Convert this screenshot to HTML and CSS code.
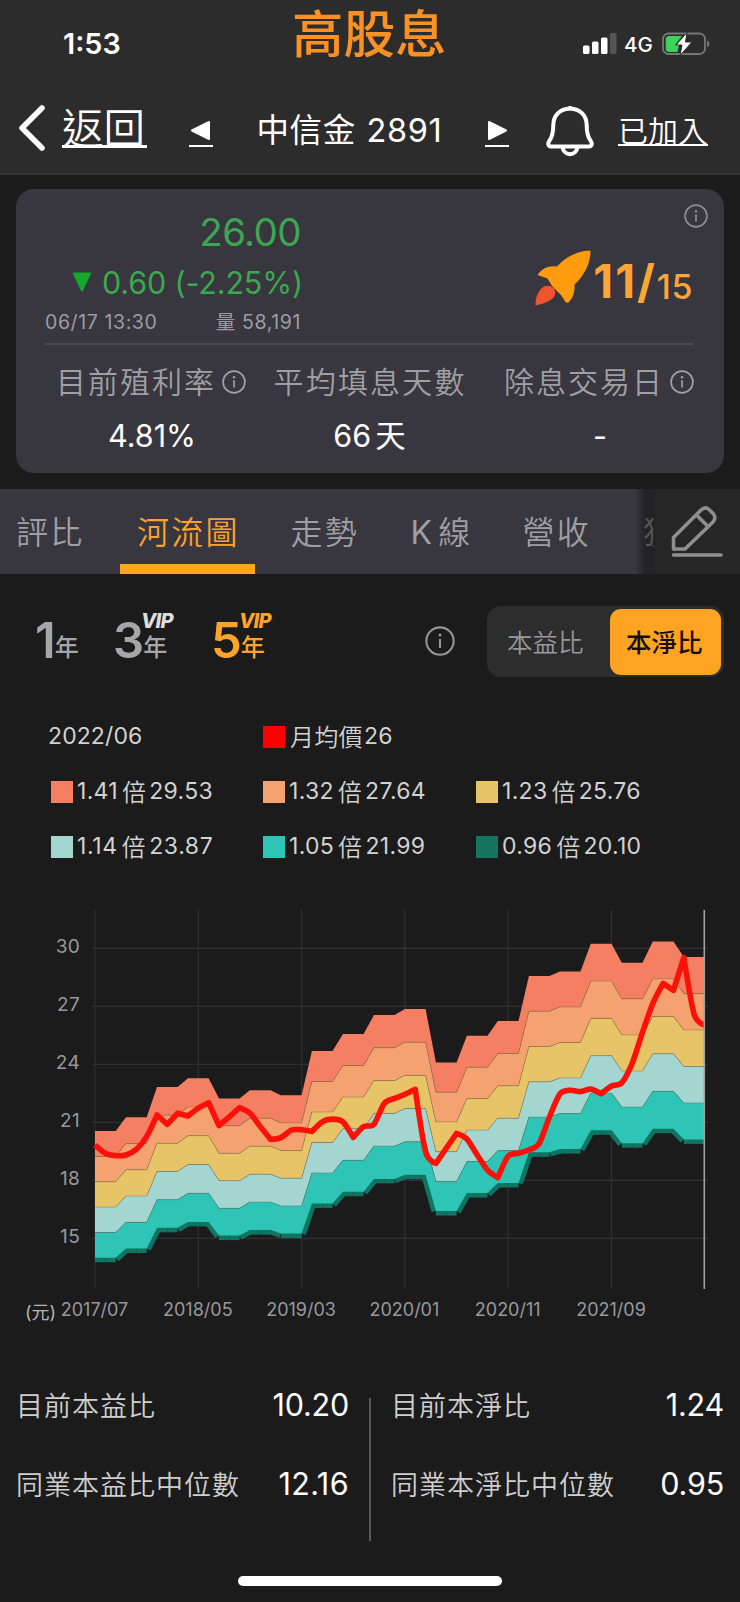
FILE: index.html
```html
<!DOCTYPE html>
<html lang="zh-Hant">
<head>
<meta charset="utf-8">
<title>高股息</title>
<link rel="stylesheet" href="styles.css">
</head>
<body>
<svg width="0" height="0" class="defs">
  <symbol id="info" viewBox="0 0 24 24">
    <circle cx="12" cy="12" r="10.9" fill="none" stroke="currentColor" stroke-width="1.7"/>
    <circle cx="12" cy="7.2" r="1.2" fill="currentColor"/>
    <path d="M12 10.3V17.5" stroke="currentColor" stroke-width="1.7"/>
  </symbol>
</svg>
<header class="header">
  <div class="status">
    <span class="clock">1:53</span>
    <span class="app-title">高股息</span>
    <div class="indicators">
      <svg width="34" height="22" viewBox="0 0 34 22">
        <rect x="0" y="12.500" width="6.500" height="8.500" rx="1.500" fill="#fff"/>
        <rect x="9" y="8.500" width="6.500" height="12.500" rx="1.500" fill="#fff"/>
        <rect x="18" y="4.500" width="6.500" height="16.500" rx="1.500" fill="#fff"/>
        <rect x="27" y="0" width="6.500" height="21" rx="1.500" fill="#555"/>
      </svg>
      <span class="network">4G</span>
      <svg class="battery" width="48" height="24" viewBox="0 0 48 24">
        <rect x="1" y="1.500" width="42" height="20.500" rx="5.500" fill="none" stroke="#777" stroke-width="1.800"/>
        <path d="M45 8.500C48.200 9.500 48.200 14 45 15Z" fill="#777"/>
        <path d="M7 4H20L13 13H17L15.500 20H7Q3.700 20 3.700 16.500V7.500Q3.700 4 7 4Z" fill="#3ad45c"/>
        <path d="M25 0.500L14 13H20L18 23.500L30 10H23.500Z" fill="#fff" stroke="#2c2c2c" stroke-width="1"/>
      </svg>
    </div>
  </div>
  <nav class="nav">
    <svg class="chev" width="28" height="48" viewBox="0 0 28 48"><path d="M24 4L4 24L24 44" fill="none" stroke="#fff" stroke-width="5.500" stroke-linecap="round" stroke-linejoin="round"/></svg>
    <a class="back">返回</a>
    <svg class="prev" width="24" height="28" viewBox="0 0 24 28"><path d="M3 10.500L20 2V19Z" fill="#fff" stroke="#fff" stroke-width="2" stroke-linejoin="round"/><path d="M0 26H24" stroke="#fff" stroke-width="2"/></svg>
    <span class="stock">中信金 2891</span>
    <svg class="next" width="24" height="28" viewBox="0 0 24 28"><path d="M21 10.500L4 2V19Z" fill="#fff" stroke="#fff" stroke-width="2" stroke-linejoin="round"/><path d="M0 26H24" stroke="#fff" stroke-width="2"/></svg>
    <svg class="bell" width="48" height="52" viewBox="0 0 48 52" fill="none" stroke="#fff" stroke-width="4" stroke-linejoin="round"><path d="M24 3.500C13.500 4 7.500 10.500 7.300 20C7.300 28 6.500 31.500 3.500 35.500C1.500 38.500 2 41.500 5 41.500H43C46 41.500 46.500 38.500 44.500 35.500C41.500 31.500 40.700 28 40.700 20C40.500 10.500 34.500 4 24 3.500Z"/><path d="M16.500 42C17.500 51.500 30.500 51.500 31.500 42"/><path d="M22.500 2.500H25.500" stroke-width="3"/></svg>
    <a class="joined">已加入</a>
  </nav>
</header>

<section class="card">
  <div class="card-top">
    <div class="quote">
      <div class="price">26.00</div>
      <div class="change"><svg width="20" height="21" viewBox="0 0 20 21"><path d="M1 1H19L10 19.500Z" fill="#14a92c" stroke="#14a92c" stroke-linejoin="round"/></svg><span>0.60 (-2.25%)</span></div>
      <div class="trade"><span>06/17 13:30</span><span>量 58,191</span></div>
    </div>
    <div class="rating">
      <svg class="info-s" width="24" height="24"><use href="#info"/></svg>
      <div class="score">
        <svg class="rocket" width="56" height="57" viewBox="0 0 56 57"><path d="M55.500 0.500C39 1 29 9 22 16.500C13 15.500 7 18.500 2.500 25C7 26.500 10 27.500 12.500 28.500L17 36L26 45L30.500 52L33 53C38 48 40 42 39.500 34.500C49 26 55.500 14 55.500 0.500Z" fill="#ff9b0f"/><path d="M0.500 55.500C0 48 4 39 9 36.500C17 33.500 23 40.500 19 47C16 51 8 54 0.500 55.500Z" fill="#f1532e"/></svg>
        <span class="big">11/</span><span class="small">15</span>
      </div>
    </div>
  </div>
  <div class="metrics">
    <div class="metric m1"><div class="label">目前殖利率<svg width="24" height="24"><use href="#info"/></svg></div><div class="val">4.81%</div></div>
    <div class="metric m2"><div class="label">平均填息天數</div><div class="val">66<i>天</i></div></div>
    <div class="metric m3"><div class="label">除息交易日<svg width="24" height="24"><use href="#info"/></svg></div><div class="val">-</div></div>
  </div>
</section>

<nav class="tabs">
  <div class="tab-list">
    <span class="tab t1">評比</span>
    <span class="tab t2 on">河流圖</span>
    <span class="tab t3">走勢</span>
    <span class="tab t4"><b>K</b>線</span>
    <span class="tab t5">營收</span>
    <span class="tab t6">獲</span>
  </div>
  <div class="edit"><svg width="54" height="54" viewBox="0 0 54 54" fill="none" stroke="#8f8f8f" stroke-width="3.600" stroke-linecap="round" stroke-linejoin="round"><path d="M3.500 33.500L31 6Q35 2 39 5.500L43.500 10Q46.500 14 43 18L15 45H3.500Z"/><path d="M26.500 11L38 22.500"/><path d="M3.500 51H51"/></svg></div>
</nav>

<div class="filters">
  <div class="range r1"><span class="n">1</span><span class="y">年</span></div>
  <div class="range r3"><span class="n">3</span><span class="y">年</span><span class="vip">VIP</span></div>
  <div class="range r5 on"><span class="n">5</span><span class="y">年</span><span class="vip">VIP</span></div>
  <svg class="info-l" width="30" height="30"><use href="#info"/></svg>
  <div class="seg"><span>本益比</span><span class="on">本淨比</span></div>
</div>

<div class="legend">
  <div class="date">2022/06</div>
  <div class="key"><i class="sw avg"></i><em class="name">月均價</em>26</div>
  <div></div>
  <div class="key"><i class="sw c1"></i>1.41<em>倍</em>29.53</div>
  <div class="key"><i class="sw c2"></i>1.32<em>倍</em>27.64</div>
  <div class="key"><i class="sw c3"></i>1.23<em>倍</em>25.76</div>
  <div class="key wide"><i class="sw c4"></i>1.14<em>倍</em>23.87</div>
  <div class="key"><i class="sw c5"></i>1.05<em>倍</em>21.99</div>
  <div class="key"><i class="sw c6"></i>0.96<em>倍</em>20.10</div>
</div>

<svg class="chart" id="chart" width="740" height="440" viewBox="0 0 740 440"></svg>

<section class="stats">
  <div class="col">
    <div class="stat"><span>目前本益比</span><b>10.20</b></div>
    <div class="stat"><span>同業本益比中位數</span><b class="loose">12.16</b></div>
  </div>
  <div class="rule"></div>
  <div class="col">
    <div class="stat"><span>目前本淨比</span><b>1.24</b></div>
    <div class="stat"><span>同業本淨比中位數</span><b>0.95</b></div>
  </div>
</section>
<div class="home"></div>
<script src="chart.js"></script>
</body>
</html>
```
FILE: styles.css
```css
* { box-sizing: border-box; }
body {
  margin: 0;
  width: 740px;
  height: 1602px;
  overflow: hidden;
  background: #1b1b1b;
  color: #fff;
  font-family: Inter, "Noto Sans CJK TC", sans-serif;
  line-height: 1;
  white-space: nowrap;
}
svg { display: block; flex: none; }
i, em { font-style: normal; }
.defs { position: absolute; }

.header { height: 175px; background: #2c2c2c; border-bottom: 2px solid #343434; }
.status { height: 88px; display: flex; }
.clock { width: 231px; padding: 30px 0 0 63px; font-size: 28.800px; font-weight: 600; }
.app-title { width: 289px; padding: 0 0 0 61px; font: 500 51.500px/62px "Noto Sans CJK TC", sans-serif; color: #fb9023; }
.indicators { display: flex; padding: 33px 0 0 63px; }
.network { margin: 2px 0 0 7px; font-size: 20.500px; font-weight: 450; width: 38px; }
.battery { margin-top: -1px; }
.nav { height: 85px; display: flex; }
.chev { margin: 16px 0 0 18px; }
.back { margin: 18px 0 0 16px; width: 85px; height: 42px; border-bottom: 3px solid #fff; font: 350 41.500px/40px "Noto Sans CJK TC", sans-serif; }
.prev { margin: 32px 0 0 42px; }
.stock { margin: 25px 0 0 43.500px; width: 228.500px; font-size: 32.500px; line-height: 36px; letter-spacing: .600px; word-spacing: 1px; }
.next { margin: 32px 0 0 0; }
.bell { margin: 17px 0 0 37px; }
.joined { margin: 26px 0 0 24px; width: 90px; height: 32px; border-bottom: 2px solid #fff; font: 350 30px/30px "Noto Sans CJK TC", sans-serif; }

.card { margin: 14px 16px 0; height: 284px; border-radius: 18px; background: #38363e; padding: 0 31px 0 29px; }
.card-top { height: 156px; border-bottom: 2px solid #4b4a50; display: flex; justify-content: space-between; }
.quote { width: 256px; display: flex; flex-direction: column; align-items: flex-end; }
.price { margin-top: 24px; font-size: 38.500px; color: #3da650; letter-spacing: -.600px; }
.change { margin: 16px -2px 0 0; display: flex; gap: 10px; align-items: center; font-size: 30.500px; letter-spacing: -.150px; color: #3da650; }
.trade { margin-top: 15px; width: 256px; display: flex; justify-content: space-between; font-size: 19.500px; letter-spacing: .600px; color: #9d9ca1; }
.rating { display: flex; flex-direction: column; align-items: flex-end; }
.info-s { margin: 15px -15px 0 0; color: #8d8c91; }
.score { display: flex; margin-top: 22px; color: #faa637; }
.rocket { margin-right: 2px; }
.big { margin-top: 8px; font-size: 46px; font-weight: 700; letter-spacing: 2px; }
.small { margin-top: 20px; font-size: 34px; font-weight: 450; letter-spacing: .500px; }
.metrics { display: flex; color: #a09fa3; }
.metric { flex: none; display: flex; flex-direction: column; }
.m1 { width: 217px; padding-left: 11px; }
.m2 { width: 231px; padding-left: 11.500px; }
.m3 { padding-left: 11px; }
.label { display: flex; align-items: center; height: 74px; font: 350 30px/30px "Noto Sans CJK TC", sans-serif; letter-spacing: 2px; padding-bottom: 4px; }
.m2 .label { letter-spacing: 2.200px; }
.label svg { margin: 4px 0 0 6px; }
.val { width: 192px; text-align: center; height: 34px; font-size: 30.500px; line-height: 34px; color: #fff; }
.val i { margin-left: 4px; }

.tabs { margin-top: 16px; height: 85px; display: flex; background: #38363e; }
.tab-list { width: 655px; display: flex; background: linear-gradient(90deg, #38363e 635px, #242427 645px, #222); overflow: hidden; }
.tab { flex: none; height: 85px; font: 350 32px/82px "Noto Sans CJK TC", sans-serif; letter-spacing: 2.300px; color: #9f9ea3; }
.tab b { font: 400 32px Inter; margin-right: 4px; }
.t1 { width: 120px; padding-left: 16px; }
.t2 { width: 135px; padding-left: 17px; }
.tab.on { color: #faa22d; border-bottom: 10px solid #ffa424; }
.t3 { margin-left: 35.500px; width: 120px; }
.t4 { width: 112px; }
.t5 { width: 120.500px; }
.t6 { width: 11px; overflow: hidden; color: #555; }
.edit { width: 85px; padding: 15px 0 0 15px; background: #262626; }

.filters { margin-top: 32px; height: 71px; display: flex; }
.range { position: relative; display: flex; color: #a6a6aa; }
.n { font-size: 49px; font-weight: 560; line-height: 60px; margin-top: 5px; letter-spacing: -1px; }
.y { font: 500 24px/24px "Noto Sans CJK TC", sans-serif; margin-top: 28px; }
.range.on { color: #ffa32b; }
.r1 { margin-left: 35px; width: 78px; }
.r3 { width: 98px; }
.r5 { width: 214px; }
.vip { position: absolute; left: 28px; top: 5px; font-size: 20px; font-weight: 800; font-style: italic; letter-spacing: -.800px; color: #ddd; }
.on .vip { color: #ffa32b; }
.info-l { margin-top: 20px; color: #949494; }
.seg { margin-left: 32px; width: 237px; padding: 3px; display: flex; border-radius: 14px; background: #2d2d2e; font: 350 25.500px/64px "Noto Sans CJK TC", sans-serif; color: #99989c; }
.seg span { width: 120px; padding-left: 17px; height: 66px; }
.seg .on { width: 111px; padding-left: 16px; background: #ffa422; border-radius: 11px; color: #160d00; font-weight: 500; }

.legend { margin: 32px 0 0 48px; display: grid; grid-template-columns: 212px 213px 200px; grid-auto-rows: 55px; font-size: 23px; letter-spacing: .300px; color: #d2d2d2; align-items: center; }
.date { letter-spacing: .100px; }
.key { display: flex; align-items: center; padding-left: 3px; }
.key em { font: 350 24px/24px "Noto Sans CJK TC", sans-serif; margin: -2px 3px 0 4px; }
.key .name { margin: -2px 1px 0 1px; }
.wide { letter-spacing: .600px; }
.sw { width: 22px; height: 22px; margin-right: 4px; }
.avg { background: #f00; }
.c1 { background: #f47f63; }
.c2 { background: #f4a26f; }
.c3 { background: #e8c468; }
.c4 { background: #a3d6d1; }
.c5 { background: #2ec4b6; }
.c6 { background: #14745f; }

.chart { margin-top: 26px; }
.axis { font-size: 19px; letter-spacing: .300px; fill: #98989c; }
.month { font-size: 18px; letter-spacing: 0; }
.unit { font-size: 18px; fill: #b5b5b8; }

.stats { margin: 38px 15px 0 16px; height: 183px; display: flex; }
.col { width: 333px; }
.rule { width: 2px; height: 143px; margin: 20px 20px 0 20px; background: #58585a; }
.stat { height: 79px; padding-top: 11px; display: flex; justify-content: space-between; }
.stat span { font: 350 27px/32px "Noto Sans CJK TC", sans-serif; letter-spacing: 1px; color: #cfcfcf; }
.stat b { font-size: 30.500px; line-height: 31px; font-weight: 400; letter-spacing: -.200px; }
.stat .loose { letter-spacing: .400px; }
.home { margin: 15px 0 0 238px; width: 264px; height: 10px; border-radius: 5px; background: #fff; }
```
FILE: chart.js
```js
const svg = document.getElementById('chart');
const top141 = [20.55, 21.26, 22.83, 23.28, 22.24, 22.66, 22.40, 24.69, 25.57, 26.55, 26.86, 24.10, 25.48, 26.24, 28.57, 28.81, 30.24, 29.26, 30.36, 29.55];
const price = [19.83, 19.40, 19.28, 19.31, 19.60, 20.26, 21.38, 20.90, 21.47, 21.33, 21.74, 22.02, 20.83, 21.29, 21.76, 21.47, 20.78, 20.12, 20.21, 20.60, 20.62, 20.53, 21.03, 21.17, 21.03, 20.22, 20.78, 20.90, 21.98, 22.24, 22.45, 22.71, 19.48, 18.88, 19.66, 20.43, 20.14, 19.31, 18.53, 18.14, 19.26, 19.40, 19.57, 19.91, 21.29, 22.47, 22.66, 22.59, 22.72, 22.48, 22.88, 23.05, 24.05, 25.66, 27.16, 28.19, 27.83, 29.52, 26.59, 26.03];
const bands = [[1.41, '#f47f63'], [1.32, '#f4a26f'], [1.23, '#e8c468'], [1.14, '#a3d6d1'], [1.05, '#2ec4b6'], [0.96, '#0f7563']];

const X = i => 95 + i * 10.33;
const Y = v => 48.4 + (30 - v) * 19.33;

function add(tag, attrs, text) {
  const el = document.createElementNS('http://www.w3.org/2000/svg', tag);
  for (const k in attrs) el.setAttribute(k, attrs[k]);
  if (text) el.textContent = text;
  svg.appendChild(el);
}
const level = m => price.map((_, i) => [X(i), Y(top141[Math.floor(i / 3)] / 1.41 * m)]);
const path = pts => pts.map(p => p[0].toFixed(1) + ' ' + p[1].toFixed(1)).join('L');

// Rounds gentle bends; sharp peaks and troughs keep their corner
function smooth(pts) {
  const tangent = i => {
    if (i === 0 || i === pts.length - 1) return [0, 0];
    const a = pts[i][1] - pts[i - 1][1], b = pts[i + 1][1] - pts[i][1];
    if (a * b < 0 && Math.abs(a - b) > 9) return [0, 0];
    return [(pts[i + 1][0] - pts[i - 1][0]) * 0.13, (a + b) * 0.13];
  };
  let d = `M${pts[0][0]} ${pts[0][1]}`;
  for (let i = 1; i < pts.length; i++) {
    const s = tangent(i - 1), e = tangent(i), p = pts[i - 1], q = pts[i];
    d += `C${p[0] + s[0]} ${p[1] + s[1]} ${q[0] - e[0]} ${q[1] - e[1]} ${q[0]} ${q[1]}`;
  }
  return d;
}

[30, 27, 24, 21, 18, 15].forEach(v => {
  add('path', { d: `M92 ${Y(v)}H708`, stroke: '#303034', 'stroke-width': 1.2 });
  add('text', { x: 80, y: Y(v) + 5, class: 'axis', 'text-anchor': 'end' }, String(v));
});
['2017/07', '2018/05', '2019/03', '2020/01', '2020/11', '2021/09'].forEach((t, k) => {
  add('path', { d: `M${X(k * 10)} 10V389`, stroke: '#303034', 'stroke-width': 1.2 });
  add('text', { x: X(k * 10) - 0.5, y: 415.5, class: 'axis month', 'text-anchor': 'middle' }, t);
});
add('text', { x: 25, y: 419, class: 'unit' }, '(元)');

// Lowest band edge: one stroke per month, the upper half is covered by the fills
const low = level(0.96);
for (let i = 1; i < low.length; i++) {
  add('path', { d: 'M' + path([low[i - 1], low[i]]), stroke: '#0f7563', 'stroke-width': 9 });
}
for (let b = 0; b < 5; b++) {
  const a = level(bands[b][0]), c = level(bands[b + 1][0]).reverse();
  add('path', { d: 'M' + path(a.concat(c)) + 'Z', fill: bands[b][1] });
  if (b) add('path', { d: 'M' + path(a), fill: 'none', stroke: '#6b5a40', 'stroke-opacity': .45, 'stroke-width': .8 });
}
add('path', { d: smooth(price.map((v, i) => [X(i), Y(v)])), fill: 'none', stroke: '#fb1109', 'stroke-width': 5.6, 'stroke-linejoin': 'round' });
add('path', { d: 'M704.300 10V389', stroke: '#a0a0a0', 'stroke-width': 1.6 });
```
